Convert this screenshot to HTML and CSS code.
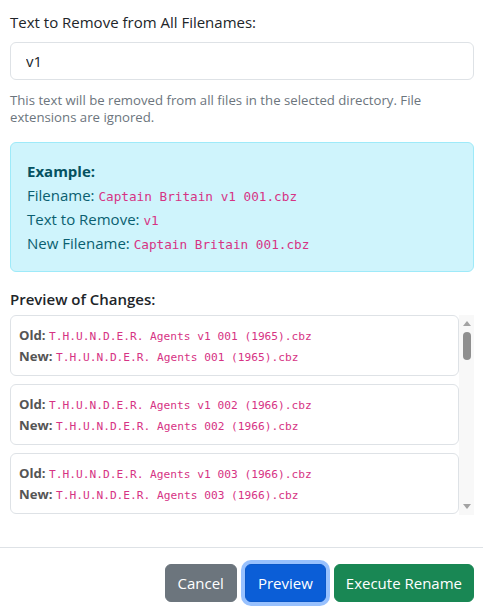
FILE: index.html
```html
<!DOCTYPE html>
<html lang="en">
<head>
<meta charset="utf-8">
<title>Rename Files</title>
<link rel="stylesheet" href="styles.css">
</head>
<body>
<div class="modal">
  <div class="modal-body">
    <div class="field">
      <label class="form-label" for="remove-text">Text to Remove from All Filenames:</label>
      <input class="form-control" id="remove-text" type="text" value="v1">
      <div class="form-text">This text will be removed from all files in the selected directory. File extensions are ignored.</div>
    </div>

    <div class="alert">
      <div class="alert-line"><strong>Example:</strong></div>
      <div class="alert-line">Filename: <code>Captain Britain v1 001.cbz</code></div>
      <div class="alert-line">Text to Remove: <code>v1</code></div>
      <div class="alert-line">New Filename: <code>Captain Britain 001.cbz</code></div>
    </div>

    <div class="preview">
      <h6 class="preview-title">Preview of Changes:</h6>
      <div class="preview-frame">
        <div class="preview-list">
          <div class="preview-item"><div><strong>Old:</strong> <code>T.H.U.N.D.E.R. Agents v1 001 (1965).cbz</code></div><div><strong>New:</strong> <code>T.H.U.N.D.E.R. Agents 001 (1965).cbz</code></div></div>
          <div class="preview-item"><div><strong>Old:</strong> <code>T.H.U.N.D.E.R. Agents v1 002 (1966).cbz</code></div><div><strong>New:</strong> <code>T.H.U.N.D.E.R. Agents 002 (1966).cbz</code></div></div>
          <div class="preview-item"><div><strong>Old:</strong> <code>T.H.U.N.D.E.R. Agents v1 003 (1966).cbz</code></div><div><strong>New:</strong> <code>T.H.U.N.D.E.R. Agents 003 (1966).cbz</code></div></div>
          <div class="preview-item"><div><strong>Old:</strong> <code>T.H.U.N.D.E.R. Agents v1 004 (1966).cbz</code></div><div><strong>New:</strong> <code>T.H.U.N.D.E.R. Agents 004 (1966).cbz</code></div></div>
          <div class="preview-item"><div><strong>Old:</strong> <code>T.H.U.N.D.E.R. Agents v1 005 (1966).cbz</code></div><div><strong>New:</strong> <code>T.H.U.N.D.E.R. Agents 005 (1966).cbz</code></div></div>
          <div class="preview-item"><div><strong>Old:</strong> <code>T.H.U.N.D.E.R. Agents v1 006 (1966).cbz</code></div><div><strong>New:</strong> <code>T.H.U.N.D.E.R. Agents 006 (1966).cbz</code></div></div>
          <div class="preview-item"><div><strong>Old:</strong> <code>T.H.U.N.D.E.R. Agents v1 007 (1966).cbz</code></div><div><strong>New:</strong> <code>T.H.U.N.D.E.R. Agents 007 (1966).cbz</code></div></div>
          <div class="preview-item"><div><strong>Old:</strong> <code>T.H.U.N.D.E.R. Agents v1 008 (1966).cbz</code></div><div><strong>New:</strong> <code>T.H.U.N.D.E.R. Agents 008 (1966).cbz</code></div></div>
          <div class="preview-item"><div><strong>Old:</strong> <code>T.H.U.N.D.E.R. Agents v1 009 (1966).cbz</code></div><div><strong>New:</strong> <code>T.H.U.N.D.E.R. Agents 009 (1966).cbz</code></div></div>
          <div class="preview-item"><div><strong>Old:</strong> <code>T.H.U.N.D.E.R. Agents v1 010 (1966).cbz</code></div><div><strong>New:</strong> <code>T.H.U.N.D.E.R. Agents 010 (1966).cbz</code></div></div>
          <div class="preview-item"><div><strong>Old:</strong> <code>T.H.U.N.D.E.R. Agents v1 011 (1967).cbz</code></div><div><strong>New:</strong> <code>T.H.U.N.D.E.R. Agents 011 (1967).cbz</code></div></div>
          <div class="preview-item"><div><strong>Old:</strong> <code>T.H.U.N.D.E.R. Agents v1 012 (1967).cbz</code></div><div><strong>New:</strong> <code>T.H.U.N.D.E.R. Agents 012 (1967).cbz</code></div></div>
          <div class="preview-item"><div><strong>Old:</strong> <code>T.H.U.N.D.E.R. Agents v1 013 (1967).cbz</code></div><div><strong>New:</strong> <code>T.H.U.N.D.E.R. Agents 013 (1967).cbz</code></div></div>
          <div class="preview-item"><div><strong>Old:</strong> <code>T.H.U.N.D.E.R. Agents v1 014 (1967).cbz</code></div><div><strong>New:</strong> <code>T.H.U.N.D.E.R. Agents 014 (1967).cbz</code></div></div>
          <div class="preview-item"><div><strong>Old:</strong> <code>T.H.U.N.D.E.R. Agents v1 015 (1967).cbz</code></div><div><strong>New:</strong> <code>T.H.U.N.D.E.R. Agents 015 (1967).cbz</code></div></div>
          <div class="preview-item"><div><strong>Old:</strong> <code>T.H.U.N.D.E.R. Agents v1 016 (1967).cbz</code></div><div><strong>New:</strong> <code>T.H.U.N.D.E.R. Agents 016 (1967).cbz</code></div></div>
          <div class="preview-item"><div><strong>Old:</strong> <code>T.H.U.N.D.E.R. Agents v1 017 (1967).cbz</code></div><div><strong>New:</strong> <code>T.H.U.N.D.E.R. Agents 017 (1967).cbz</code></div></div>
          <div class="preview-item"><div><strong>Old:</strong> <code>T.H.U.N.D.E.R. Agents v1 018 (1968).cbz</code></div><div><strong>New:</strong> <code>T.H.U.N.D.E.R. Agents 018 (1968).cbz</code></div></div>
          <div class="preview-item"><div><strong>Old:</strong> <code>T.H.U.N.D.E.R. Agents v1 019 (1968).cbz</code></div><div><strong>New:</strong> <code>T.H.U.N.D.E.R. Agents 019 (1968).cbz</code></div></div>
          <div class="preview-item"><div><strong>Old:</strong> <code>T.H.U.N.D.E.R. Agents v1 020 (1969).cbz</code></div><div><strong>New:</strong> <code>T.H.U.N.D.E.R. Agents 020 (1969).cbz</code></div></div>
        </div>
        <div class="scrollbar" aria-hidden="true">
          <span class="scroll-arrow scroll-arrow-up"></span>
          <span class="scroll-track"><span class="scroll-thumb"></span></span>
          <span class="scroll-arrow scroll-arrow-down"></span>
        </div>
      </div>
    </div>
  </div>

  <div class="modal-footer">
    <button class="btn btn-secondary" type="button">Cancel</button>
    <button class="btn btn-primary btn-focus" type="button">Preview</button>
    <button class="btn btn-success" type="button">Execute Rename</button>
  </div>
</div>
</body>
</html>
```

FILE: styles.css
```css
* {
  box-sizing: border-box;
}

html, body {
  margin: 0;
  padding: 0;
  background: #ffffff;
}

body {
  font-family: "Open Sans", "Noto Sans", "Liberation Sans", sans-serif;
  font-size: 15px;
  line-height: 24px;
  color: #212529;
}

.modal {
  width: 483px;
  height: 611px;
  display: flex;
  flex-direction: column;
  overflow: hidden;
}

.modal-body {
  padding: 10px 9px 32px 10px;
}

.field {
  display: flex;
  flex-direction: column;
}

.form-label {
  display: block;
  line-height: 24px;
  margin-bottom: 8px;
}

.form-control {
  display: block;
  width: 100%;
  height: 38px;
  padding: 0 15px;
  font: inherit;
  color: #212529;
  background: #ffffff;
  border: 1px solid #dee2e6;
  border-radius: 6px;
  outline: none;
}

.form-text {
  margin-top: 12px;
  font-size: 13.2px;
  line-height: 17px;
  color: #6c757d;
}

code {
  font-family: "DejaVu Sans Mono", "Liberation Mono", monospace;
  color: #d63384;
  line-height: 1;
}

.alert {
  margin-top: 16px;
  padding: 16px;
  background: #cff4fc;
  border: 1px solid #9eeaf9;
  border-radius: 6px;
  color: #0a5f70;
}

.alert-line {
  height: 24px;
  line-height: 24px;
  white-space: nowrap;
}

.alert strong {
  font-weight: 700;
  color: #055160;
}

.alert code {
  font-size: 12.7px;
}

.preview-title {
  margin: 16px 0 5px;
  font-size: 15px;
  font-weight: 600;
  line-height: 22px;
  color: #212529;
}

.preview-frame {
  display: flex;
  height: 200px;
}

.preview-list {
  flex: 1;
  min-width: 0;
  overflow-y: auto;
  scrollbar-width: none;
}

.preview-item {
  padding: 9px 8px 8px;
  margin-bottom: 8px;
  border: 1px solid #dee2e6;
  border-radius: 6px;
  font-size: 13.2px;
  line-height: 21px;
}

.preview-item > div {
  height: 21px;
  white-space: nowrap;
}

.preview-item strong {
  font-weight: 700;
  color: #555555;
}

.preview-item code {
  font-size: 11.2px;
}

.scrollbar {
  width: 15px;
  flex: none;
  display: flex;
  flex-direction: column;
  align-items: center;
  background: #f8f8f8;
}

.scroll-arrow {
  display: block;
  width: 0;
  height: 0;
  border-left: 4.5px solid transparent;
  border-right: 4.5px solid transparent;
}

.scroll-arrow-up {
  margin-top: 6px;
  border-bottom: 5px solid #a3a3a3;
}

.scroll-arrow-down {
  margin-bottom: 6px;
  border-top: 5px solid #a3a3a3;
}

.scroll-track {
  flex: 1;
  display: block;
  width: 8px;
  padding-top: 6px;
}

.scroll-thumb {
  display: block;
  width: 8px;
  height: 28px;
  border-radius: 4px;
  background: #8f8f8f;
}

.modal-footer {
  display: flex;
  justify-content: flex-end;
  gap: 8px;
  padding: 16px 9px 9px;
  border-top: 1px solid #dee2e6;
}

.btn {
  height: 38px;
  padding: 0 12px;
  font: inherit;
  line-height: 24px;
  color: #ffffff;
  border: 1px solid transparent;
  border-radius: 6px;
  cursor: pointer;
}

.btn-secondary {
  background: #6c757d;
  border-color: #6c757d;
}

.btn-primary {
  background: #0b5ed7;
  border-color: #0a58ca;
}

.btn-focus {
  box-shadow: 0 0 0 4px rgba(49, 132, 253, 0.5);
}

.btn-success {
  padding: 0 11px;
  background: #198754;
  border-color: #198754;
}
```
